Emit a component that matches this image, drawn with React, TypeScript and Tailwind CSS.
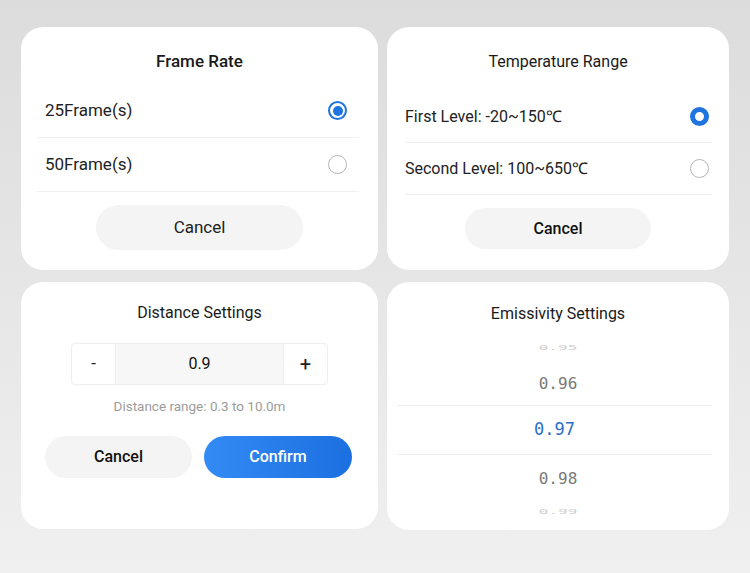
function Radio({ on, thick }: { on: boolean; thick?: boolean }) {
  if (!on) {
    return <span className="block w-[19px] h-[19px] rounded-full border-[1.5px] border-[#b5b5b5]" />;
  }
  if (thick) {
    return <span className="block w-[19px] h-[19px] rounded-full border-[5.5px] border-[#1f74e0] bg-white" />;
  }
  return (
    <span className="flex items-center justify-center w-[19px] h-[19px] rounded-full border-2 border-[#1f74e0]">
      <span className="block w-[10px] h-[10px] rounded-full bg-[#1f74e0]" />
    </span>
  );
}

function FrameRateCard() {
  return (
    <div className="h-[243px] bg-white rounded-[22px] pt-[22px] flex flex-col">
      <h2 className="text-center text-[17px] leading-6 font-medium text-[#1a1a1a]">Frame Rate</h2>
      <div className="mt-[11px] mx-4 mr-[19px]">
        {["25Frame(s)", "50Frame(s)"].map((t, i) => (
          <div key={t} className="h-[54px] flex items-center justify-between pl-2 pr-3 border-b border-[#f0f0f0]">
            <span className="text-[17px] text-[#222]">{t}</span>
            <Radio on={i === 0} />
          </div>
        ))}
      </div>
      <button className="mt-[13px] mx-auto w-[207px] h-[45px] rounded-full bg-[#f4f4f4] text-[17px] text-[#222]">
        Cancel
      </button>
    </div>
  );
}

function TemperatureCard() {
  return (
    <div className="h-[243px] bg-white rounded-[22px] pt-[23px] flex flex-col">
      <h2 className="text-center text-[16px] leading-6 text-[#1a1a1a]">Temperature Range</h2>
      <div className="mt-[17px] ml-[18px] mr-[17px]">
        {["First Level: -20~150℃", "Second Level: 100~650℃"].map((t, i) => (
          <div key={t} className="h-[52px] flex items-center justify-between pr-[3px] border-b border-[#efefef]">
            <span className="text-[16px] text-[#222]">{t}</span>
            <Radio on={i === 0} thick />
          </div>
        ))}
      </div>
      <button className="mt-[13px] mx-auto w-[186px] h-[41px] rounded-full bg-[#f4f4f4] text-[16px] font-medium text-[#111]">
        Cancel
      </button>
    </div>
  );
}

function DistanceCard() {
  return (
    <div className="h-[247px] bg-white rounded-[22px] pt-[19px] flex flex-col items-center">
      <h2 className="text-center text-[16px] leading-6 text-[#1a1a1a]">Distance Settings</h2>
      <div className="mt-[18px] w-[257px] h-[42px] flex rounded border border-[#eeeeee] overflow-hidden">
        <div className="w-[43px] flex items-center justify-center text-[17px] text-[#222]">-</div>
        <div className="flex-1 flex items-center justify-center bg-[#f7f7f7] border-x border-[#eeeeee] text-[16px] text-[#111]">
          0.9
        </div>
        <div className="w-[43px] flex items-center justify-center text-[20px] text-[#222]">+</div>
      </div>
      <p className="mt-[11px] text-[13.5px] text-[#9c9c9c]">Distance range: 0.3 to 10.0m</p>
      <div className="mt-[20px] flex gap-3 -translate-x-px">
        <button className="w-[147px] h-[42px] rounded-full bg-[#f4f4f4] text-[16px] font-medium text-[#111]">
          Cancel
        </button>
        <button className="w-[148px] h-[42px] rounded-full bg-gradient-to-r from-[#338bf5] to-[#1c6fe0] text-[16px] font-medium text-white">
          Confirm
        </button>
      </div>
    </div>
  );
}

function EmissivityCard() {
  return (
    <div className="h-[248px] bg-white rounded-[22px] pt-[20px] flex flex-col overflow-hidden">
      <h2 className="text-center text-[16px] leading-6 text-[#1a1a1a]">Emissivity Settings</h2>
      <div className="mt-2 font-['DejaVu_Sans_Mono',monospace] text-[16px]">
        <div className="h-[28px] flex items-center justify-center">
          <span className="scale-y-[0.45] text-[#cfcfcf]">0.95</span>
        </div>
        <div className="h-[43px] flex items-center justify-center text-[#7a7a7a]">0.96</div>
        <div className="h-[50px] mx-[10px] mr-[17px] flex items-center justify-center border-y border-[#eeeeee] text-[#2a6fc4] text-[17px]">
          0.97
        </div>
        <div className="h-[48px] flex items-center justify-center text-[#7a7a7a]">0.98</div>
        <div className="h-[18px] flex items-center justify-center">
          <span className="scale-y-[0.45] text-[#cfcfcf]">0.99</span>
        </div>
      </div>
    </div>
  );
}

export default function App() {
  return (
    <div className="w-[750px] h-[573px] bg-gradient-to-b from-[#dcdcdc] to-[#f0f0f0] pt-[27px] pl-[21px] font-['Roboto',sans-serif]">
      <div className="grid grid-cols-[357px_342px] gap-x-[9px] gap-y-[12px]">
        <FrameRateCard />
        <TemperatureCard />
        <DistanceCard />
        <EmissivityCard />
      </div>
    </div>
  );
}
